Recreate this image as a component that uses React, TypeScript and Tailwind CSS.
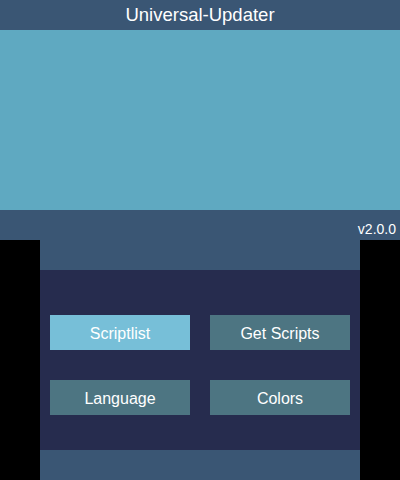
export default function App() {
  const font = { fontFamily: '"Liberation Sans", Arial, sans-serif' };
  const buttons = [
    { label: 'Scriptlist', active: true },
    { label: 'Get Scripts', active: false },
    { label: 'Language', active: false },
    { label: 'Colors', active: false },
  ];

  return (
    <div className="w-[400px] h-[480px] bg-black flex flex-col text-white" style={font}>
      {/* top screen */}
      <div className="h-[240px] flex flex-col">
        <div className="h-[30px] bg-[#3a5674] flex items-center justify-center text-[18.5px] leading-none pt-[1px]">
          Universal-Updater
        </div>
        <div className="flex-1 bg-[#5fa9c1]" />
        <div className="h-[30px] bg-[#3a5674] flex items-center justify-end pr-[4px] pt-[8px] text-[14px] leading-none">
          v2.0.0
        </div>
      </div>

      {/* bottom screen */}
      <div className="h-[240px] w-[320px] mx-auto flex flex-col">
        <div className="h-[30px] bg-[#3a5674]" />
        <div className="flex-1 bg-[#262c4e] grid grid-cols-2 gap-x-[20px] gap-y-[30px] px-[10px] pt-[45px] content-start">
          {buttons.map((b) => (
            <div
              key={b.label}
              className={`h-[35px] flex items-center justify-center pt-[3px] text-[16px] leading-none ${
                b.active ? 'bg-[#77bfd8]' : 'bg-[#4d7582]'
              }`}
            >
              {b.label}
            </div>
          ))}
        </div>
        <div className="h-[30px] bg-[#3a5674]" />
      </div>
    </div>
  );
}
